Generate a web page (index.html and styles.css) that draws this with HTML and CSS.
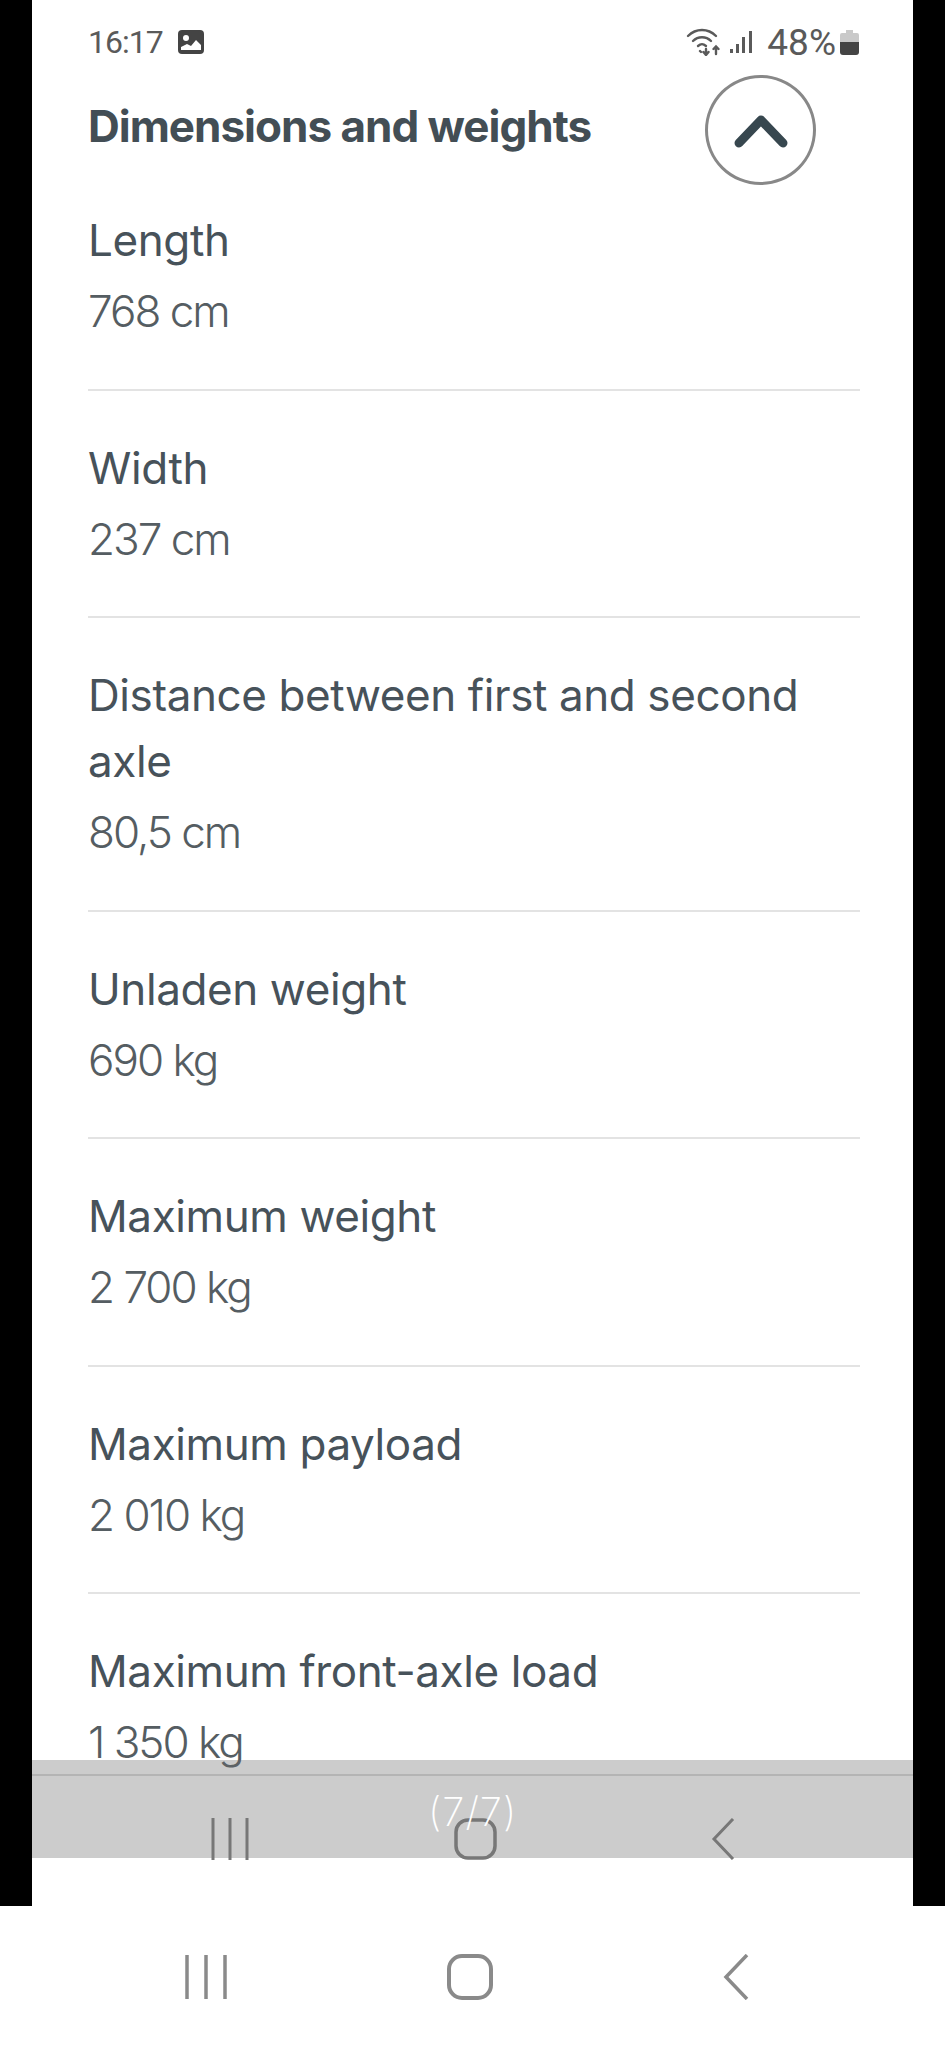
FILE: index.html
```html
<!DOCTYPE html>
<html lang="en">
    <head>
        <title>Dimensions and weights</title>
        <meta charset="UTF-8">
        <link rel="stylesheet" href="styles.css">
    </head>

    <body>
        <div class="frame">
            <div class="status">
                <div class="status-left">
                    <span>16:17</span>
                    <svg class="pic-icon" width="26" height="24" viewBox="0 0 26 24">
                        <rect width="26" height="24" rx="4" fill="#444"/>
                        <circle cx="8" cy="8" r="3" fill="#fff"/>
                        <path d="M3 20v-3l6-3 4 2 5-6 5 5v5z" fill="#fff"/>
                    </svg>
                </div>
                <div class="status-right">
                    <svg width="36" height="28" viewBox="0 0 36 28" fill="none" stroke="#5a5a5a" stroke-width="2.4" stroke-linecap="round">
                        <path d="M2 8c8-8 20-8 28 0"/>
                        <path d="M7 13c5-5 13-5 18 0"/>
                        <path d="M12 18c3-2.500 5-2.500 8 0"/>
                        <path d="M14 23l1 1M20 21v6M17.500 24l2.500 3 2.500-3M30 26v-7M27.500 21l2.500-2.500 2.500 2.500"/>
                    </svg>
                    <svg class="signal" width="24" height="22" viewBox="0 0 24 22" fill="#5a5a5a">
                        <rect x="0" y="18" width="3" height="4"/>
                        <rect x="6" y="13" width="3" height="9"/>
                        <rect x="12" y="6" width="3" height="16"/>
                        <rect x="19" y="0" width="3" height="22"/>
                    </svg>
                    <span class="battery-text">48%</span>
                    <svg class="battery" width="19" height="25" viewBox="0 0 19 25">
                        <path d="M6 0h7v3h4q2 0 2 2v7H0V5q0-2 2-2h4z" fill="#c9c9c9"/>
                        <path d="M0 12h19v10q0 3-3 3H3q-3 0-3-3z" fill="#444"/>
                    </svg>
                </div>
            </div>

            <div class="section-head">
                <h1>Dimensions and weights</h1>
                <div class="toggle">
                    <svg width="54" height="36" viewBox="0 0 54 36" fill="none" stroke="#37474f" stroke-width="9" stroke-linecap="round" stroke-linejoin="round">
                        <path d="M5 31L27 8l22 23"/>
                    </svg>
                </div>
            </div>

            <div class="spec">
                <p class="label">Length</p>
                <p class="value">768 cm</p>
            </div>
            <div class="spec">
                <p class="label">Width</p>
                <p class="value">237 cm</p>
            </div>
            <div class="spec">
                <p class="label">Distance between first and second axle</p>
                <p class="value">80,5 cm</p>
            </div>
            <div class="spec">
                <p class="label">Unladen weight</p>
                <p class="value">690 kg</p>
            </div>
            <div class="spec">
                <p class="label">Maximum weight</p>
                <p class="value">2 700 kg</p>
            </div>
            <div class="spec">
                <p class="label">Maximum payload</p>
                <p class="value">2 010 kg</p>
            </div>
            <div class="spec spec-last">
                <p class="label">Maximum front-axle load</p>
                <p class="value">1 350 kg</p>
            </div>

            <div class="overlay">
                <span class="counter">(7/7)</span>
                <svg class="nav-bars" width="40" height="42" viewBox="0 0 40 42" fill="none" stroke="#777" stroke-width="3">
                    <path d="M3 0v42M20 0v42M37 0v42"/>
                </svg>
                <svg class="nav-home" width="45" height="42" viewBox="0 0 45 42" fill="none" stroke="#777" stroke-width="3.500">
                    <rect x="3" y="2" width="39" height="38" rx="12"/>
                </svg>
                <svg class="nav-back" width="24" height="42" viewBox="0 0 24 42" fill="none" stroke="#777" stroke-width="3">
                    <path d="M22 1L3 21l19 20"/>
                </svg>
            </div>
        </div>

        <div class="bottom-nav">
            <svg class="nav-bars" width="44" height="44" viewBox="0 0 44 44" fill="none" stroke="#8a8a8a" stroke-width="3.500">
                <path d="M3 0v44M22 0v44M41 0v44"/>
            </svg>
            <svg class="nav-home" width="46" height="46" viewBox="0 0 46 46" fill="none" stroke="#8a8a8a" stroke-width="4">
                <rect x="2" y="2" width="42" height="42" rx="13"/>
            </svg>
            <svg class="nav-back" width="26" height="46" viewBox="0 0 26 46" fill="none" stroke="#8a8a8a" stroke-width="3.500">
                <path d="M24 1L3 23l21 22"/>
            </svg>
        </div>
    </body>
</html>
```

FILE: styles.css
```css
body{
    margin: 0;
    background-color: white;
    font-family: Inter, "Liberation Sans", sans-serif;
}

.frame{
    position: relative;
    height: 1906px;
    box-sizing: border-box;
    border-left: 32px solid black;
    border-right: 32px solid black;
    background-color: white;
    overflow: hidden;
}

.status{
    display: flex;
    justify-content: space-between;
    align-items: center;
    height: 84px;
    padding: 0 54px 0 56px;
    color: #5a5a5a;
    font-family: Roboto, sans-serif;
    font-size: 32px;
    letter-spacing: -1px;
}

.status-left{
    display: flex;
    align-items: center;
    gap: 15px;
}

.status-right{
    display: flex;
    align-items: center;
    gap: 8px;
}

.battery-text{
    margin-left: 5px;
    font-size: 37px;
    letter-spacing: 0;
}

.battery{
    margin-left: -4px;
}

.section-head{
    display: flex;
    justify-content: space-between;
    align-items: center;
    height: 110px;
    margin-top: -9px;
    margin-bottom: -22px;
    padding: 0 97px 0 56px;
}

h1{
    margin: 0 0 8px 0;
    color: #434e55;
    font-size: 44px;
    font-weight: 700;
    letter-spacing: -1px;
}

.toggle{
    display: flex;
    justify-content: center;
    align-items: center;
    width: 111px;
    height: 110px;
    box-sizing: border-box;
    border: 3px solid #888;
    border-radius: 50%;
}

.spec{
    margin: 0 53px 0 56px;
    padding: 44px 0 44.5px 0;
    border-bottom: 2px solid #e3e3e3;
}

.spec-last{
    border-bottom: none;
}

.label{
    margin: 0;
    color: #47525a;
    font-size: 44px;
    line-height: 66px;
    letter-spacing: -0.4px;
}

.value{
    margin: 5px 0 0 0;
    color: #555d62;
    font-size: 44px;
    font-weight: 300;
    line-height: 66px;
    letter-spacing: -2px;
}

.overlay{
    position: absolute;
    top: 1760px;
    left: 0;
    right: 0;
    height: 98px;
    box-sizing: border-box;
    padding: 58px 0 0 178px;
    display: flex;
    align-items: flex-start;
    background-color: rgba(109, 109, 109, 0.35);
}

.overlay::before{
    content: "";
    position: absolute;
    top: 14px;
    left: 0;
    right: 0;
    height: 2px;
    background-color: #b4b4b4;
}

.overlay .nav-home{
    margin-left: 203px;
}

.overlay .nav-back{
    margin-left: 213px;
}

.counter{
    position: absolute;
    top: 29px;
    left: 396px;
    color: white;
    font-size: 40px;
    font-weight: 200;
    line-height: 46px;
    letter-spacing: 1px;
}

.bottom-nav{
    display: flex;
    align-items: center;
    height: 142px;
    padding: 0 0 0 184px;
}

.bottom-nav .nav-home{
    margin-left: 219px;
}

.bottom-nav .nav-back{
    margin-left: 230px;
}
```
